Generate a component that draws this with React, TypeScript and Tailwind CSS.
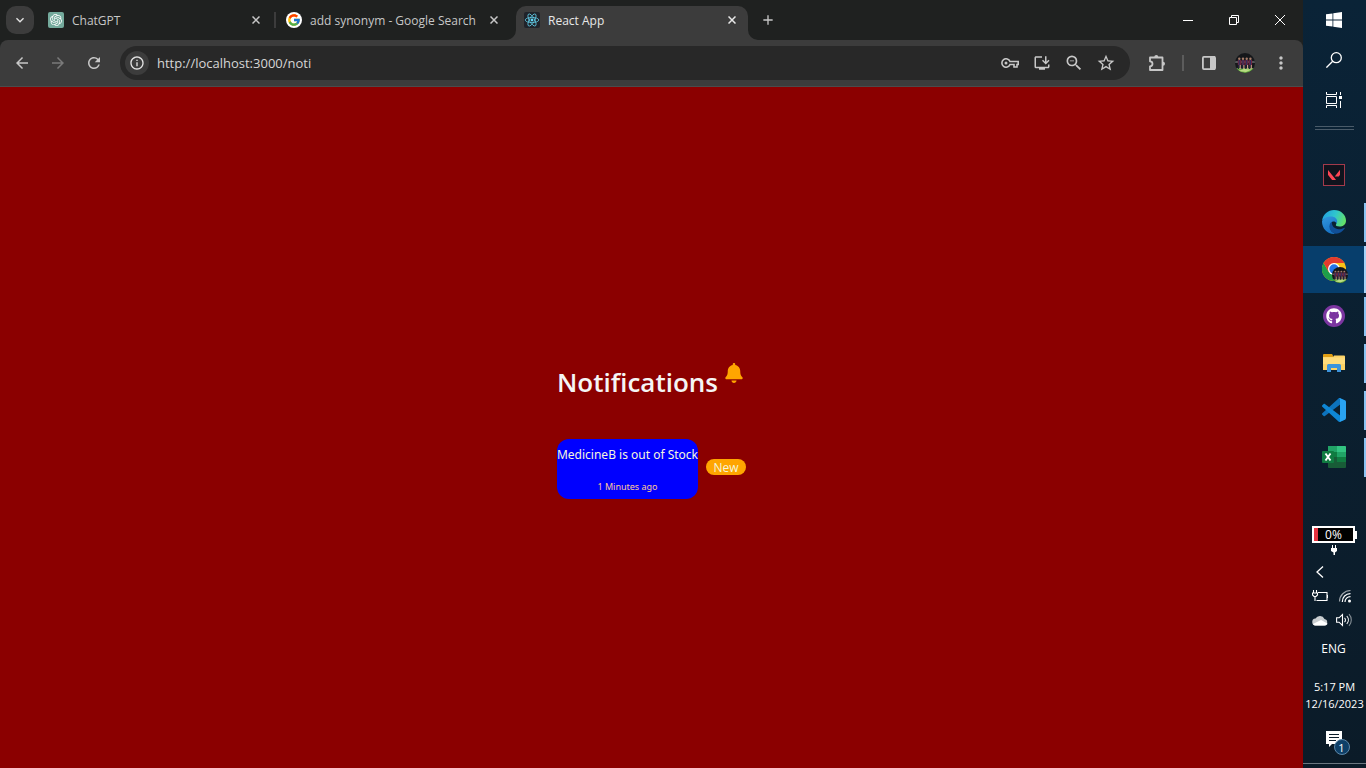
import type { ReactNode } from 'react';
import {
  MdArrowBack,
  MdArrowForward,
  MdInfoOutline,
  MdKeyboardArrowDown,
  MdMoreVert,
  MdOutlineInstallDesktop,
  MdRefresh,
  MdStarOutline,
  MdAdd,
  MdZoomOut,
} from 'react-icons/md';
import { FaBell, FaGithub } from 'react-icons/fa';
import { FcGoogle } from 'react-icons/fc';
import { SiOpenai, SiValorant } from 'react-icons/si';

function ReactLogo() {
  return (
    <svg viewBox="0 0 16 16" className="size-4 shrink-0" aria-hidden="true">
      <rect width="16" height="16" rx="2" fill="#20232a" />
      <g fill="none" stroke="#5fc8e2" strokeWidth="0.8">
        <ellipse cx="8" cy="8" rx="6.8" ry="2.6" />
        <ellipse cx="8" cy="8" rx="6.8" ry="2.6" transform="rotate(60 8 8)" />
        <ellipse cx="8" cy="8" rx="6.8" ry="2.6" transform="rotate(120 8 8)" />
      </g>
      <circle cx="8" cy="8" r="1.4" fill="#61dafb" />
    </svg>
  );
}

function TeamPhoto({ className }: { className: string }) {
  return (
    <svg viewBox="0 0 20 20" className={className} aria-hidden="true">
      <defs>
        <clipPath id="photo-clip">
          <circle cx="10" cy="10" r="10" />
        </clipPath>
      </defs>
      <g clipPath="url(#photo-clip)">
        <rect width="20" height="20" fill="#15171a" />
        <path d="M0 8h20v2H0z" fill="#55585b" />
        <path d="M0 15h20v5H0z" fill="#69ad45" />
        <path d="M3 18l6-2 8 .5-6 2.500z" fill="#b9dd83" />
        {[2.8, 6.5, 10.2, 13.9].map((x) => (
          <g key={x}>
            <circle cx={x + 1.5} cy="5.800" r="1.200" fill="#a77c69" />
            <rect x={x} y="7" width="3.200" height="5" fill="#6d2440" />
            <rect x={x + 1} y="7" width="1" height="5" fill="#283567" />
            <rect x={x} y="12" width="1.200" height="4" fill="#20243b" />
            <rect x={x + 1.8} y="12" width="1.200" height="4" fill="#c79a88" />
          </g>
        ))}
      </g>
    </svg>
  );
}

function EdgeLogo() {
  return (
    <svg viewBox="0 0 24 24" className="size-6" aria-hidden="true">
      <defs>
        <linearGradient id="edge-top" x1="0" y1="0.3" x2="1" y2="0.6">
          <stop offset="0" stopColor="#229fe0" />
          <stop offset="0.5" stopColor="#2fc6cd" />
          <stop offset="1" stopColor="#66e264" />
        </linearGradient>
        <linearGradient id="edge-left" x1="0" y1="0" x2="0.4" y2="1">
          <stop offset="0" stopColor="#3397de" />
          <stop offset="1" stopColor="#1672c4" />
        </linearGradient>
      </defs>
      <path d="M0 11C1 4 6 0 12 0c7 0 12 5 12 10.500 0 4-3 6-6.500 6-2.500 0-4.300-.8-3.500-2 2-3-.5-7-5-7C5 7.500 1 9 0 11z" fill="url(#edge-top)" />
      <path d="M0 11.500C1 8 5 6.500 9 6.500c5 0 7.500 4 5.500 7-1-2-3-2.500-4.500-1.500C6 15 8 23 14 23.800 6 25 0 19 0 11.500z" fill="url(#edge-left)" />
      <path d="M10 11.800C5.500 14 7 23 14 23.800c3.500-.3 6.700-2.300 8.700-5.300.3-.6-.2-.9-.8-.6C15 21.500 9 17 10 11.800z" fill="#104f98" />
    </svg>
  );
}

function ChromeLogo() {
  return (
    <span className="relative block size-6">
      <svg viewBox="0 0 24 24" className="size-6" aria-hidden="true">
        <circle cx="12" cy="12" r="12" fill="#fbc116" />
        <path d="M1.600 6A12 12 0 0 0 12 24l5.200-9H12L6.800 15z" fill="#1e9e4a" />
        <path d="M1.600 6A12 12 0 0 1 22.400 6H12L6.800 15z" fill="#e33b2e" />
        <circle cx="12" cy="12" r="6" fill="#fff" />
        <circle cx="12" cy="12" r="4.700" fill="#2375e8" />
      </svg>
      <TeamPhoto className="absolute left-2.5 top-2.5 size-4" />
    </span>
  );
}

function GithubLogo() {
  return (
    <span className="grid size-[22px] place-items-center rounded-full bg-[#7b35a0]">
      <FaGithub className="size-4 text-white" />
    </span>
  );
}

function FolderLogo() {
  return (
    <svg viewBox="0 0 22 18" className="h-[18px] w-[22px]" aria-hidden="true">
      <path d="M0 1a1 1 0 0 1 1-1h8l1 1.500V6H0z" fill="#e09e13" />
      <path d="M0 3h10l1-1.500h10a1 1 0 0 1 1 1V16H0z" fill="#fdd264" />
      <path d="M0 3.500h22V10H0z" fill="#ffdc7c" />
      <path d="M4 18v-6.500A1.500 1.500 0 0 1 5.500 10h11a1.500 1.500 0 0 1 1.500 1.500V18h-4v-4H8v4z" fill="#3b94dd" />
    </svg>
  );
}

function CodeLogo() {
  return (
    <svg viewBox="0 0 100 100" className="size-6" aria-hidden="true">
      <path d="M96.461 10.796L75.857.876C73.472-.273 70.622.212 68.750 2.083L1.299 63.583C-.516 65.237-.514 68.094 1.303 69.745L6.813 74.754C8.298 76.104 10.535 76.204 12.134 74.991L93.361 13.370C96.086 11.303 100 13.246 100 16.667C100 14.026 98.625 11.838 96.461 10.796Z" fill="#0d73bd" />
      <path d="M96.461 89.204L75.857 99.125C73.472 100.273 70.622 99.788 68.750 97.917L1.299 36.417C-.516 34.763-.514 31.906 1.303 30.255L6.813 25.246C8.298 23.896 10.535 23.796 12.134 25.010L93.361 86.630C96.086 88.697 100 86.754 100 83.333C100 85.974 98.625 88.162 96.461 89.204Z" fill="#0e86d4" />
      <path d="M75.858 99.126C73.472 100.274 70.622 99.789 68.750 97.917C71.056 100.223 75 98.590 75 95.328V4.672C75 1.410 71.056-.223 68.750 2.083C70.622.211 73.472-.274 75.858.874L96.459 10.781C98.623 11.822 100 14.011 100 16.413V83.587C100 85.989 98.623 88.179 96.459 89.220Z" fill="#29a3f2" />
    </svg>
  );
}

function ExcelLogo() {
  return (
    <svg viewBox="0 0 24 22" className="h-[22px] w-6" aria-hidden="true">
      <rect x="6" width="18" height="22" rx="1" fill="#185c37" />
      <path d="M6 0h9v6H6z" fill="#21a366" />
      <path d="M15 0h8a1 1 0 0 1 1 1v5h-9z" fill="#33c481" />
      <path d="M6 6h9v5H6z" fill="#107c41" />
      <path d="M15 6h9v5h-9z" fill="#21a366" />
      <path d="M15 11h9v5h-9z" fill="#107c41" />
      <rect y="5" width="12" height="12" rx="1" fill="#107c41" />
      <path d="M3.500 7.500l5 7M8.500 7.500l-5 7" stroke="#fff" strokeWidth="1.900" />
    </svg>
  );
}

function ValorantLogo() {
  return (
    <span className="grid size-[22px] place-items-center border border-[#a33a4b] bg-[#10131d]">
      <SiValorant className="size-3 text-[#ff4655]" />
    </span>
  );
}

function Tab({ title, icon, active = false }: { title: string; icon: ReactNode; active?: boolean }) {
  return (
    <div
      className={
        active
          ? 'relative ml-1.5 flex h-[34px] w-[232px] items-center rounded-t-[10px] bg-[#3c3c3c] pb-1.5 pl-2 text-[#e8e8e8]'
          : 'flex h-[34px] w-[232px] items-center pb-1.5 pl-2 text-[#c7c7c7]'
      }
    >
      {active && (
        <>
          <svg viewBox="0 0 10 10" className="absolute -left-2.5 bottom-0 size-2.5" aria-hidden="true">
            <path d="M10 0v10H0A10 10 0 0 0 10 0z" fill="#3c3c3c" />
          </svg>
          <svg viewBox="0 0 10 10" className="absolute -right-2.5 bottom-0 size-2.5" aria-hidden="true">
            <path d="M0 0v10h10A10 10 0 0 1 0 0z" fill="#3c3c3c" />
          </svg>
        </>
      )}
      {icon}
      <button type="button" className="ml-2 flex-1 truncate pt-0.5 text-left text-xs">
        {title}
      </button>
      <button type="button" aria-label={`Close ${title}`} className="mr-2 grid size-4 place-items-center">
        <svg viewBox="0 0 8 8" className="size-2" stroke="currentColor" strokeWidth="1.500" aria-hidden="true">
          <path d="M.5.5l7 7M7.500.5l-7 7" />
        </svg>
      </button>
    </div>
  );
}

function WindowButton({ label, children }: { label: string; children: ReactNode }) {
  return (
    <button type="button" aria-label={label} className="grid h-10 w-[46px] place-items-center">
      <svg viewBox="0 0 10 10" className="size-2.5 overflow-visible" fill="none" stroke="#fff" strokeWidth="1" aria-hidden="true">
        {children}
      </svg>
    </button>
  );
}

function TabStrip() {
  return (
    <header className="flex h-10 items-end pl-1.5">
      <button type="button" aria-label="Search tabs" className="mb-1.5 mr-1.5 grid size-7 place-items-center rounded-[10px] bg-[#3c3c3c] text-[#e3e3e3]">
        <MdKeyboardArrowDown className="size-4" />
      </button>
      <Tab title="ChatGPT" icon={<span className="grid size-4 place-items-center rounded-xs bg-[#74aa9c]"><SiOpenai className="size-3 text-white" /></span>} />
      <span className="mx-0.5 mb-3 h-4 w-0.5 bg-[#3c3c3c]" />
      <Tab title="add synonym - Google Search" icon={<span className="grid size-4 place-items-center rounded-full bg-white"><FcGoogle className="size-3.5" /></span>} />
      <Tab title="React App" active icon={<ReactLogo />} />
      <button type="button" aria-label="New tab" className="mb-1.5 ml-1.5 grid size-7 place-items-center text-[#c7c7c7]">
        <MdAdd className="size-4" />
      </button>
      <div className="ml-auto flex">
        <WindowButton label="Minimize"><path d="M0 5.500h10" /></WindowButton>
        <WindowButton label="Restore">
          <path d="M.5 2.500h7v7h-7zM2.500 2.500v-2h7v7h-2" />
        </WindowButton>
        <WindowButton label="Close"><path d="M0 0l10 10M10 0L0 10" /></WindowButton>
      </div>
    </header>
  );
}

function IconButton({ label, dim = false, children }: { label: string; dim?: boolean; children: ReactNode }) {
  return (
    <button type="button" aria-label={label} className={dim ? 'grid size-8 place-items-center text-[#7a7a7a]' : 'grid size-8 place-items-center text-[#c7c7c7]'}>
      {children}
    </button>
  );
}

function Toolbar() {
  return (
    <nav aria-label="Browser toolbar" className="flex h-[47px] items-center rounded-t-lg border-b border-[#4b4b4b] bg-[#3c3c3c] pl-1.5 pr-1.5">
      <div className="flex gap-1">
        <IconButton label="Back"><MdArrowBack className="size-[18px]" /></IconButton>
        <IconButton label="Forward" dim><MdArrowForward className="size-[18px]" /></IconButton>
        <IconButton label="Reload"><MdRefresh className="size-[18px]" /></IconButton>
      </div>
      <div className="ml-2.5 flex h-[34px] flex-1 items-center rounded-full bg-[#282828] pl-[5px] pr-2">
        <button type="button" aria-label="Site information" className="grid size-6 place-items-center rounded-full bg-[#3c3c3c] text-[#e3e3e3]">
          <MdInfoOutline className="size-4" />
        </button>
        <input
          type="text"
          aria-label="Address"
          defaultValue="http://localhost:3000/noti"
          className="ml-2 min-w-0 flex-1 bg-transparent pt-0.5 text-[13px] text-[#d6d6d6] outline-none"
        />
        <IconButton label="Passwords">
          <svg viewBox="0 0 18 10" className="h-2.5 w-[18px]" fill="none" stroke="currentColor" strokeWidth="1.600" aria-hidden="true">
            <path d="M9 3.500h8.200v3H16V9h-3V6.500H9A4.200 4.200 0 1 1 9 3.500z" />
            <circle cx="5" cy="5" r="1.500" fill="currentColor" stroke="none" />
          </svg>
        </IconButton>
        <IconButton label="Install app"><MdOutlineInstallDesktop className="size-[18px]" /></IconButton>
        <IconButton label="Zoom out"><MdZoomOut className="size-5" /></IconButton>
        <IconButton label="Bookmark"><MdStarOutline className="size-5" /></IconButton>
      </div>
      <div className="ml-[11px] flex items-center">
        <IconButton label="Extensions">
          <svg viewBox="0 0 18 18" className="size-[18px]" fill="none" stroke="currentColor" strokeWidth="1.800" aria-hidden="true">
            <path d="M2 3.500h12.500V16H2v-3.700a2.300 2.300 0 0 0 0-5z" strokeLinejoin="round" />
            <path d="M6.300 3a2 2 0 0 1 4 0zM15 7.700a2 2 0 0 1 0 4z" fill="currentColor" stroke="none" />
          </svg>
        </IconButton>
        <span className="mx-[9px] h-4 w-0.5 bg-[#5c5c5c]" />
        <IconButton label="Side panel">
          <svg viewBox="0 0 14 14" className="size-3.5" aria-hidden="true">
            <rect x="0.9" y="0.9" width="12.2" height="12.2" rx="1" fill="none" stroke="currentColor" strokeWidth="1.800" />
            <path d="M8 0h5v14H8z" fill="currentColor" />
          </svg>
        </IconButton>
        <span className="mx-1"><IconButton label="Profile"><TeamPhoto className="size-5" /></IconButton></span>
        <IconButton label="Menu"><MdMoreVert className="size-5" /></IconButton>
      </div>
    </nav>
  );
}

function NotificationsPage() {
  return (
    <main className="grid flex-1 place-items-center bg-[#8b0000]">
      <section className="pb-px pt-2">
        <div className="flex gap-1.5">
          <h1 className="text-[26px] leading-[38px] font-semibold text-[#f5f5f5]">Notifications</h1>
          <FaBell className="size-5 text-[#ffa500]" />
        </div>
        <article className="mt-[38px] flex items-center gap-2">
          <div className="flex h-[60px] flex-col items-center justify-between rounded-xl bg-[#0000ff] pb-1.5 pt-1.5">
            <p className="font-['Noto_Sans',sans-serif] text-xs leading-5 text-[#f5f5dc]">MedicineB is out of Stock</p>
            <time className="font-['Noto_Sans',sans-serif] text-[9px] leading-3 text-[#ffc896]">1 Minutes ago</time>
          </div>
          <span className="mb-1 h-4 w-10 rounded-full bg-[#ffa500] text-center text-xs leading-[18px] text-[#f5f5dc]">New</span>
        </article>
      </section>
    </main>
  );
}

function AppButton({ label, running = true, active = false, children }: { label: string; running?: boolean; active?: boolean; children: ReactNode }) {
  return (
    <button
      type="button"
      aria-label={label}
      className={active ? 'relative grid h-[47px] w-full place-items-center bg-[#073e6c] pb-0.5 pr-0.5' : 'relative grid h-[47px] w-full place-items-center pb-0.5 pr-0.5'}
    >
      {children}
      {running && <span className={active ? 'absolute inset-y-0 right-0 w-0.5 bg-[#a5d3f7]' : 'absolute inset-y-1 right-0 w-0.5 bg-[#8cc4f2]'} />}
    </button>
  );
}

function Taskbar() {
  return (
    <aside aria-label="Taskbar" className="flex w-[63px] shrink-0 flex-col items-center bg-linear-to-b from-[#0a2337] to-[#0b1b28] text-white">
      <button type="button" aria-label="Start" className="grid h-10 w-full place-items-center pr-0.5">
        <svg viewBox="0 0 16 16" className="size-4" fill="#fff" aria-hidden="true">
          <path d="M0 2.300L6.500 1.400v6.100H0zM7.300 1.300L16 0v7.500H7.300zM0 8.400h6.500v6.200L0 13.700zM7.300 8.400H16V16l-8.700-1.300z" />
        </svg>
      </button>
      <button type="button" aria-label="Search" className="grid h-10 w-full place-items-center pr-0.5">
        <svg viewBox="0 0 16 16" className="size-4" fill="none" stroke="#fff" strokeWidth="1.300" aria-hidden="true">
          <circle cx="10.300" cy="5.700" r="5" />
          <path d="M6.700 9.300L.4 15.600" />
        </svg>
      </button>
      <button type="button" aria-label="Task view" className="grid h-10 w-full place-items-center pr-0.5">
        <svg viewBox="0 0 16 16" className="size-4" fill="none" stroke="#fff" strokeWidth="1" aria-hidden="true">
          <path d="M.5 4.500h10v7H.5zM.5 0v2.500h10V0M.5 16v-2.500h10V16M14.500 0v3M14.500 9v7" />
          <path d="M13 4h3v3h-3z" fill="#fff" stroke="none" />
        </svg>
      </button>
      <div className="mb-[22px] mt-1.5 h-1 w-[39px] border-y border-[#4a5b69]" />

      <AppButton label="Valorant" running={false}><ValorantLogo /></AppButton>
      <AppButton label="Microsoft Edge"><EdgeLogo /></AppButton>
      <AppButton label="Google Chrome" active><ChromeLogo /></AppButton>
      <AppButton label="GitHub Desktop"><GithubLogo /></AppButton>
      <AppButton label="File Explorer"><FolderLogo /></AppButton>
      <AppButton label="Visual Studio Code"><CodeLogo /></AppButton>
      <AppButton label="Excel"><ExcelLogo /></AppButton>

      <div className="mt-auto flex w-full flex-col items-center">
        <div className="flex items-center">
          <span className="flex h-[17px] w-[43px] border-2 border-white bg-black">
            <span className="w-1 bg-[#e3323f]" />
            <span className="flex-1 pr-1 text-center text-xs leading-[13px]">0%</span>
          </span>
          <span className="h-2 w-0.5 bg-white" />
        </div>
        <svg viewBox="0 0 8 10" className="mr-0.5 mt-0.5 h-2.5 w-2" fill="#fff" aria-hidden="true">
          <path d="M1 3h6v3L5 7.500V10H3.500V7.500L1 6zM2 0h1v3H2zM5 0h1v3H5z" />
        </svg>
        <button type="button" aria-label="Show hidden icons" className="ml-2.5 mr-auto mt-2.5 grid size-3.5 place-items-center">
          <svg viewBox="0 0 8 12" className="h-3 w-2" fill="none" stroke="#fff" strokeWidth="1.300" aria-hidden="true">
            <path d="M7 .5L1 6l6 5.500" />
          </svg>
        </button>
        <div className="mt-2.5 flex w-full items-center justify-between pl-[9px] pr-3.5">
          <svg viewBox="0 0 16 12" className="h-3 w-4" fill="none" stroke="#fff" strokeWidth="1.100" aria-hidden="true">
            <path d="M6 2.500h9v8H4.500M15.500 5v3M1.500 0v3M4.500 0v3M.5 3h5v2L4 6.500H2L.5 5zM3 6.500V11" />
          </svg>
          <svg viewBox="0 0 14 14" className="size-3.5" fill="none" stroke="#fff" strokeWidth="1.200" aria-hidden="true">
            <path d="M1.500 12.500A11 11 0 0 1 12.500 1.500" opacity="0.6" />
            <path d="M4.300 13A8 8 0 0 1 12.500 4.600M7 13A5.300 5.300 0 0 1 12.500 7.600" />
            <circle cx="11.500" cy="12" r="1.500" fill="#fff" stroke="none" />
          </svg>
        </div>
        <div className="mt-2.5 flex w-full items-center justify-between pl-[9px] pr-3.5">
          <svg viewBox="0 0 16 11" className="h-[11px] w-4" aria-hidden="true">
            <path d="M4 10.500a3.500 3.500 0 0 1-.5-7A5 5 0 0 1 12.500 4a3.300 3.300 0 0 1 0 6.500z" fill="#c9cdd0" />
            <path d="M1 9l8-4 6.500 3.500c-.5 1.500-1.500 2-3 2H4c-1.500 0-2.500-.5-3-1.500z" fill="#fff" />
          </svg>
          <svg viewBox="0 0 16 14" className="h-3.5 w-4" fill="none" stroke="#fff" strokeWidth="1.100" aria-hidden="true">
            <path d="M.6 4.800h2.500L6.500 1.500v11L3.100 9.200H.6zM8.500 4.800a3 3 0 0 1 0 4.400M10.800 3a6 6 0 0 1 0 8" />
            <path d="M13 1.200a8.500 8.500 0 0 1 0 11.600" opacity="0.5" />
          </svg>
        </div>
        <button type="button" className="mt-[13px] pr-0.5 text-xs leading-[18px]">ENG</button>
        <button type="button" className="mt-5 text-[11px] leading-[17px]">
          <span className="block">5:17 PM</span>
          <span className="block">12/16/2023</span>
        </button>
        <button type="button" aria-label="Notifications, 1 new" className="relative mb-2 mr-0.5 mt-[19px] h-6 w-4">
          <svg viewBox="0 0 16 16" className="absolute left-0 top-0 size-4" aria-hidden="true">
            <path d="M0 0h16v13H6l-3 3v-3H0z" fill="#fff" />
            <path d="M3 3.500h10M3 6.500h10M3 9.500h7" stroke="#0b1d2b" strokeWidth="1" />
          </svg>
          <span className="absolute left-2 top-2 grid size-4 place-items-center rounded-full border border-[#5d87a8] bg-[#0d3f68] text-[11px] leading-none">1</span>
        </button>
        <div className="mb-1 h-px w-full bg-[#6b7780]" />
      </div>
    </aside>
  );
}

export default function App() {
  return (
    <div className="flex min-h-screen bg-[#0a2337] font-['Open_Sans','Noto_Sans',sans-serif]">
      <div className="flex min-w-0 flex-1 flex-col bg-[#1f2120]">
        <TabStrip />
        <Toolbar />
        <NotificationsPage />
      </div>
      <Taskbar />
    </div>
  );
}
